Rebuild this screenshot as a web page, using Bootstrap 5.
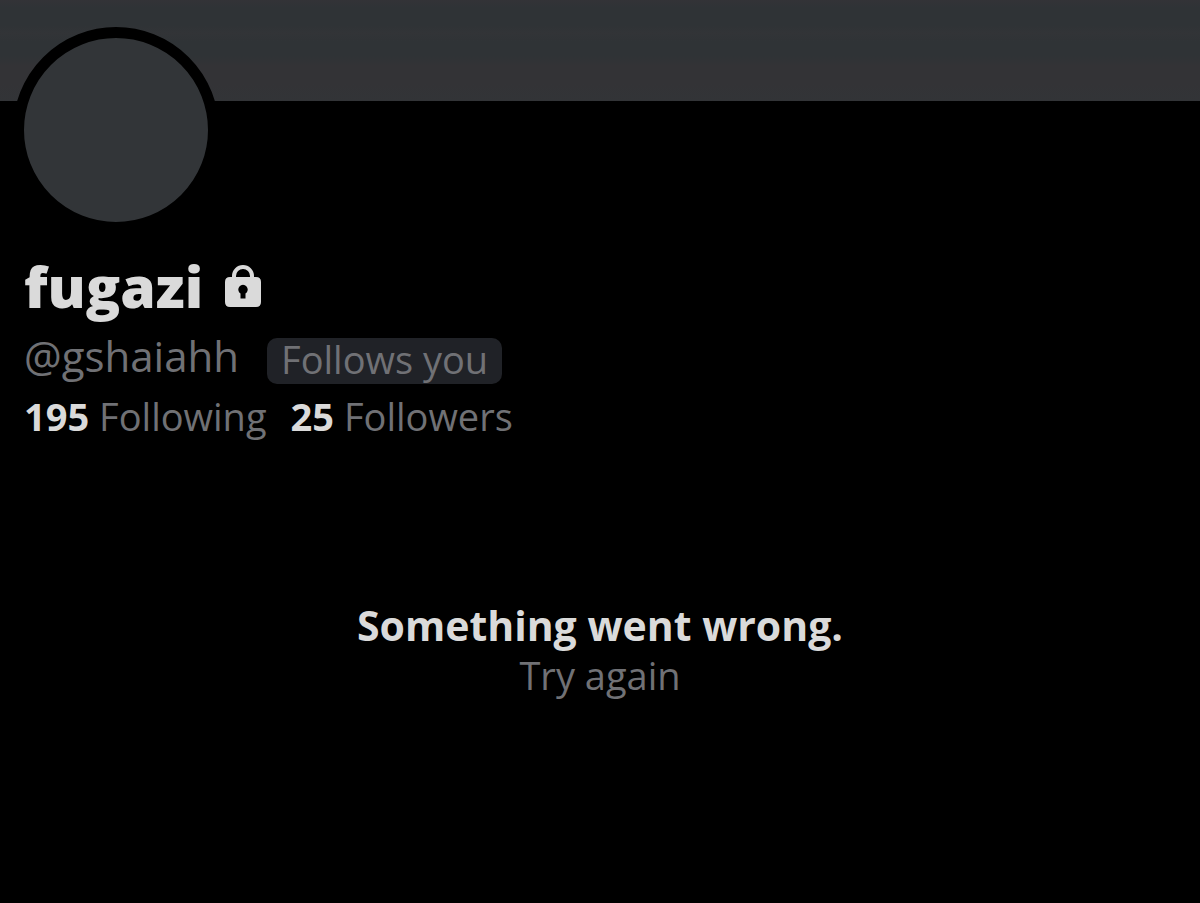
<!DOCTYPE html>
<html lang="en">
<head>
<meta charset="utf-8">
<meta name="viewport" content="width=device-width, initial-scale=1">
<title>fugazi (@gshaiahh)</title>
<link href="https://cdn.jsdelivr.net/npm/bootstrap@5.3.0/dist/css/bootstrap.min.css" rel="stylesheet">
<style>
body { background: #000; color: #dadada; font-family: "Open Sans", "Noto Sans", sans-serif; font-size: 38px; line-height: 48px; }
.banner { height: 101px; background: linear-gradient(#333337 0, #2f3336 8px, #2f3336 26px, #323437 33px, #2f3336 42px, #2f3336 56px, #333336 66px, #333336 84px, #323437 100%); }
.profile { padding: 0 24px; }
.avatar { width: 206px; height: 206px; margin: -74px 0 17px -11px; border: 11px solid #000; background: #323538; }
.display-name { font-size: 57px; line-height: 72px; font-weight: 800; }
.name-row { gap: 22px; }
.lock { width: 36px; height: 43px; }
.muted-text, .muted-text:hover { color: #707175; }
.handle-row { margin-top: 16px; gap: 28px; }
.handle { font-size: 42px; line-height: 36px; }
.follow-tag { background: #202227; border-radius: 10px; padding: 0 14px 4px; line-height: 42px; }
.stats { margin-top: 8px; }
.stats a { text-decoration: none; color: inherit; }
.stats b { font-weight: 700; }
.failure { margin-top: 159px; }
.failure-title { font-size: 41px; line-height: 52px; font-weight: 700; }
.retry { line-height: 48px; }
</style>
</head>
<body>
<header class="banner"></header>
<main>
  <section class="profile">
    <div class="avatar rounded-circle position-relative"></div>
    <div class="name-row d-flex align-items-center">
      <h1 class="display-name mb-0">fugazi</h1>
      <svg class="lock" viewBox="0 0 36 43" role="img" aria-label="Protected account"><path fill="none" stroke="#dadada" stroke-width="4" d="M9 14V11a9 9 0 0 1 18 0v3"/><path fill="#dadada" fill-rule="evenodd" d="M5 12H31Q36 12 36 17V37Q36 42 31 42H5Q0 42 0 37V17Q0 12 5 12ZM15.500 28.500V33.500H20.500V28.500A4.700 4.700 0 1 0 15.500 28.500Z"/></svg>
    </div>
    <div class="handle-row d-flex align-items-start">
      <span class="handle muted-text">@gshaiahh</span>
      <span class="follow-tag muted-text">Follows you</span>
    </div>
    <div class="stats d-flex gap-4">
      <a href="#following"><b>195</b> <span class="muted-text">Following</span></a>
      <a href="#followers"><b>25</b> <span class="muted-text">Followers</span></a>
    </div>
  </section>
  <section class="failure text-center">
    <h2 class="failure-title mb-0">Something went wrong.</h2>
    <button type="button" class="retry muted-text bg-transparent border-0 p-0 d-block mx-auto">Try again</button>
  </section>
</main>
<script src="https://cdn.jsdelivr.net/npm/bootstrap@5.3.0/dist/js/bootstrap.bundle.min.js"></script>
</body>
</html>
